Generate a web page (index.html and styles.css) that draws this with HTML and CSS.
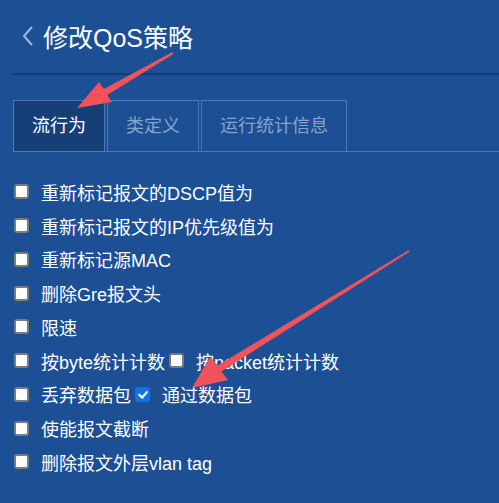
FILE: index.html
```html
<!DOCTYPE html>
<html lang="zh-CN">
<head>
    <meta charset="UTF-8">
    <meta name="viewport" content="width=device-width, initial-scale=1.0">
    <title>修改QoS策略</title>
    <link rel="stylesheet" href="styles.css">
</head>
<body>
    <div class="page">
        <div class="header">
            <svg class="back" width="14" height="22" viewBox="0 0 14 22">
                <polyline points="11,2 3,11 11,20" fill="none" stroke="#a3b7d6" stroke-width="2"/>
            </svg>
            <h1>修改QoS策略</h1>
        </div>

        <div class="tabs">
            <div class="tab active">流行为</div>
            <div class="tab">类定义</div>
            <div class="tab">运行统计信息</div>
        </div>

        <div class="options">
            <div class="row"><label><input type="checkbox">重新标记报文的DSCP值为</label></div>
            <div class="row"><label><input type="checkbox">重新标记报文的IP优先级值为</label></div>
            <div class="row"><label><input type="checkbox">重新标记源MAC</label></div>
            <div class="row"><label><input type="checkbox">删除Gre报文头</label></div>
            <div class="row"><label><input type="checkbox">限速</label></div>
            <div class="row">
                <label><input type="checkbox">按byte统计计数</label>
                <label class="second"><input type="checkbox">按packet统计计数</label>
            </div>
            <div class="row">
                <label><input type="checkbox">丢弃数据包</label>
                <label class="second"><input type="checkbox" checked>通过数据包</label>
            </div>
            <div class="row"><label><input type="checkbox">使能报文截断</label></div>
            <div class="row"><label><input type="checkbox">删除报文外层vlan tag</label></div>
        </div>
    </div>

    <!-- annotation arrows -->
    <svg class="marks" width="499" height="503" viewBox="0 0 499 503">
        <polygon fill="#f2525a" points="172.5,52.1 103.8,89.0 99,82 77,108 112,102 107.2,95.0 173.5,53.9"/>
        <polygon fill="#f2525a" points="408.5,250.2 217.6,365.5 210,357 192,388 228,380 221.4,371.5 409.5,251.8"/>
    </svg>
</body>
</html>
```

FILE: styles.css
```css
body {
    margin: 0;
    background-color: #1c4f94;
    font-family: "Liberation Sans", "Noto Sans CJK SC", sans-serif;
    color: #fff;
    width: 499px;
    height: 503px;
    overflow: hidden;
    position: relative;
}

.page {
    padding-left: 13px;
}

.header {
    display: flex;
    align-items: center;
    height: 73px;
    border-bottom: 2px solid #153d75;
}

.back {
    margin-left: 8px;
    margin-right: 8px;
    margin-top: -2px;
}

h1 {
    margin: 0;
    font-size: 25px;
    font-weight: normal;
    margin-top: -2px;
}

.tabs {
    display: flex;
    margin-top: 25px;
    border-bottom: 1px solid #4d77b3;
}

.tab {
    height: 50px;
    line-height: 50px;
    padding: 0 18px;
    border: 1px solid #4d77b3;
    border-bottom: none;
    margin-right: 2px;
    font-size: 18px;
    color: #89a4cc;
}

.tab.active {
    background-color: #163f78;
    color: #fff;
}

.options {
    padding-top: 23px;
}

.row {
    display: flex;
    align-items: center;
    height: 33.75px;
    font-size: 18px;
}

label {
    display: flex;
    align-items: center;
}

input[type="checkbox"] {
    appearance: none;
    -webkit-appearance: none;
    box-sizing: border-box;
    width: 15px;
    height: 15px;
    margin: 0 12px 0 1px;
    background-color: #fff;
    border: 2px solid #7b7b7b;
    border-radius: 3px;
    position: relative;
}

input[type="checkbox"]:checked {
    background-color: #1273e6;
    border-color: #1273e6;
}

input[type="checkbox"]:checked::after {
    content: "";
    position: absolute;
    left: 3px;
    top: 0px;
    width: 4px;
    height: 7px;
    border-right: 2px solid #fff;
    border-bottom: 2px solid #fff;
    transform: rotate(40deg);
}

.second input[type="checkbox"] {
    margin-left: 4px;
}

.marks {
    position: absolute;
    left: 0;
    top: 0;
    pointer-events: none;
}
```
